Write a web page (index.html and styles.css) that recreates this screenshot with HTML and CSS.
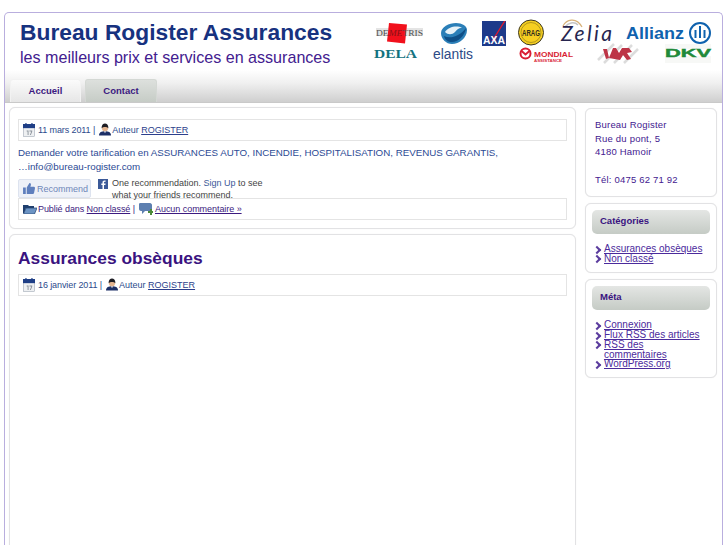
FILE: index.html
```html
<!DOCTYPE html>
<html lang="fr">
<head>
<meta charset="utf-8">
<title>Bureau Rogister Assurances</title>
<link rel="stylesheet" href="styles.css">
</head>
<body>
<svg width="0" height="0" class="defs">
  <defs>
    <symbol id="cal" viewBox="0 0 13 15">
      <rect x="0.5" y="1.5" width="12" height="13" fill="#eef0f2" stroke="#9aa4b0" stroke-width="0.6"/>
      <rect x="0" y="1" width="13" height="4.5" fill="#1f3f86"/>
      <rect x="2.5" y="0" width="1.4" height="2" fill="#1f3f86"/>
      <rect x="9" y="0" width="1.4" height="2" fill="#1f3f86"/>
      <path d="M4 8h2v5H5V9H4zM7 8h3v1l-1.500 4h-1l1.400-4H7z" fill="#8b929b"/>
    </symbol>
    <symbol id="user" viewBox="0 0 14 14">
      <path d="M0 14c0-4 3-5 7-5s7 1 7 5z" fill="#1c2f66"/>
      <circle cx="7" cy="5.500" r="3.600" fill="#e3b48f"/>
      <path d="M3 5.500C3 1.500 5 0 7 0s4 1.500 4 5.500C9 3.500 5 3.500 3 5.500z" fill="#1d1d24"/>
      <path d="M6 9h2l-1 2.500z" fill="#fff"/>
    </symbol>
  </defs>
</svg>
<div class="page">
  <header class="masthead">
    <div class="brand">
      <h1 class="title">Bureau Rogister Assurances</h1>
      <p class="tagline">les meilleurs prix et services en assurances</p>
    </div>
    <svg class="logos" width="350" height="50" viewBox="370 15 350 50">
      <!-- Demetris -->
      <rect x="376" y="28" width="47" height="8" fill="#e4e4e4"/>
      <path d="M389 23l18 1.500-2 19-18-2z" fill="#f1101c"/>
      <text x="376" y="35.500" class="lg-serif" font-size="9" fill="#4f4f4f" textLength="47" lengthAdjust="spacingAndGlyphs">DE<tspan fill="#8a1015" font-style="italic">ME</tspan>TRIS</text>
      <!-- Dela -->
      <text x="374" y="58" class="lg-serif" font-size="13" font-weight="700" fill="#12727f" textLength="43" lengthAdjust="spacingAndGlyphs">DELA</text>
      <!-- Elantis -->
      <path d="M441 33c0-6 8-10 15-10 6 0 11 3 11 7 0 8-8 14-15 14-6 0-11-5-11-11z" fill="#2b7fb8"/>
      <path d="M445 32c3-5 12-7 17-4-4 0-5 2-7 4-3 3-7 3-10 0z" fill="#e7f2f8"/>
      <path d="M444 36c6 3 15 1 22-8-1 8-8 14-14 14-4 0-7-2-8-6z" fill="#0f4f87"/>
      <text x="433" y="59" class="lg-sans" font-size="15.500" fill="#2c4a86" textLength="40" lengthAdjust="spacingAndGlyphs">elantis</text>
      <!-- AXA -->
      <rect x="482" y="21" width="24" height="25" fill="#1d3a8a"/>
      <path d="M504 21h1.500L493 41h-1.500z" fill="#e2192c"/>
      <text x="483" y="44" class="lg-sans" font-size="11" font-weight="700" fill="#fff" textLength="22" lengthAdjust="spacingAndGlyphs">AXA</text>
      <!-- Arag -->
      <circle cx="531" cy="32.500" r="12.500" fill="#f6cf21" stroke="#3a3520" stroke-width="1"/>
      <circle cx="531" cy="32.500" r="10" fill="none" stroke="#6d5f1a" stroke-width="0.500"/>
      <text x="522" y="36" class="lg-sans" font-size="8.500" font-weight="700" fill="#2f2c1d" textLength="18" lengthAdjust="spacingAndGlyphs">ARAG</text>
      <!-- Zelia -->
      <path d="M563 26c3-6 13-10 19 1" fill="none" stroke="#d8b27a" stroke-width="1.200"/>
      <path d="M565 27c3-4 9-6 13-2" fill="none" stroke="#c4c4c4" stroke-width="1.500"/>
      <text x="561" y="41" class="lg-script" font-size="21" fill="#27254f" textLength="51" lengthAdjust="spacing">Zelia</text>
      <!-- Allianz -->
      <text x="626" y="39" class="lg-sans" font-size="16" font-weight="700" fill="#0f62ae" textLength="58" lengthAdjust="spacingAndGlyphs">Allianz</text>
      <circle cx="700" cy="33" r="10" fill="none" stroke="#0f62ae" stroke-width="2"/>
      <path d="M694.500 30h2v8h-2zM699 26h2v12h-2zM703.500 30h2v8h-2z" fill="#0f62ae"/>
      <!-- Mondial -->
      <circle cx="525.500" cy="53.500" r="5" fill="#fff" stroke="#d91e34" stroke-width="2"/>
      <path d="M521 50.500l4.500 4 4.500-4" fill="none" stroke="#d91e34" stroke-width="2"/>
      <text x="534" y="57" class="lg-sans" font-size="7.500" font-weight="700" fill="#d91e34" textLength="39" lengthAdjust="spacingAndGlyphs">MONDIAL</text>
      <text x="534" y="62" class="lg-sans" font-size="3.800" font-weight="700" fill="#d91e34" textLength="28" lengthAdjust="spacingAndGlyphs">ASSISTANCE</text>
      <!-- IAR -->
      <path d="M598 60l16-16M604 63l18-18M614 63l18-18M624 63l14-14" stroke="#dcdcdc" stroke-width="2.500" fill="none"/>
      <path d="M603 49h4l2 9-3 1zM609 58l4-10 3 0 3 5 3-5 7 0 3 4-5 1 4 6-4 1-4-5-3 5z" fill="#bd3446"/>
      <!-- DKV -->
      <rect x="665" y="44" width="46" height="5" fill="#f7f8f6"/>
      <rect x="665" y="56" width="46" height="7" fill="#f7f8f6"/>
      <text x="665" y="56.500" class="lg-sans" font-size="10.500" font-weight="700" fill="#1f8a3a" textLength="46" lengthAdjust="spacingAndGlyphs" stroke="#1f8a3a" stroke-width="0.400">DKV</text>
    </svg>
  </header>
  <nav class="nav">
    <a class="tab tab-current" href="#">Accueil</a>
    <a class="tab" href="#">Contact</a>
  </nav>
  <div class="body">
    <main class="posts">
      <article class="card post post-first">
        <div class="meta">
          <svg class="ico-cal"><use href="#cal"/></svg>
          <span class="meta-date">11 mars 2011 |</span>
          <svg class="ico-user"><use href="#user"/></svg>
          <span class="meta-author">Auteur <a href="#">ROGISTER</a></span>
        </div>
        <p class="excerpt">Demander votre tarification en ASSURANCES AUTO, INCENDIE, HOSPITALISATION, REVENUS GARANTIS,<br>…info@bureau-rogister.com</p>
        <div class="social">
          <span class="recommend">
            <svg width="12" height="11" viewBox="0 0 13 12"><path d="M0 5h3v7H0zM4 5l3-5c2 0 2 2 1 4h4c1 0 1 1 1 2l-1 5c0 1-1 1-2 1H4z" fill="#5f7fbd"/></svg>
            Recommend
          </span>
          <svg class="fb" width="10" height="10" viewBox="0 0 10 10"><rect width="10" height="10" fill="#3b5998"/><path d="M6 10V6h1.400l.2-1.500H6V3.600c0-.5.200-.8.800-.8h.8V1.500H6.500C5 1.500 4.500 2.400 4.500 3.500v1H3.300V6h1.200v4z" fill="#fff"/></svg>
          <p class="fb-text">One recommendation. <a href="#">Sign Up</a> to see<br>what your friends recommend.</p>
        </div>
        <div class="meta meta-foot">
          <svg width="14" height="10" viewBox="0 0 14 10"><path d="M0 1h5l1 1h5v2H3L1 9H0z" fill="#1f3f6e"/><path d="M3 4h11l-2.500 6H0.500z" fill="#6c94c4" stroke="#1f3f6e" stroke-width="0.700"/></svg>
          <span class="foot-cat">Publié dans <a href="#">Non classé</a> |</span>
          <svg class="ico-comment" width="14" height="13" viewBox="0 0 14 13"><path d="M1 1h10c1 0 2 1 2 2v4c0 1-1 2-2 2H6l-3 3V9H2C1 9 0 8 0 7V3c0-1 0-2 1-2z" fill="#5d7fb0"/><path d="M9 9h2V7h2v2h1v2h-1v2h-2v-2H9z" fill="#4c8a3a"/></svg>
          <span class="foot-com"><a href="#">Aucun commentaire »</a></span>
        </div>
      </article>
      <article class="card post post-second">
        <h2 class="post-title">Assurances obsèques</h2>
        <div class="meta">
          <svg class="ico-cal"><use href="#cal"/></svg>
          <span class="meta-date">16 janvier 2011 |</span>
          <svg class="ico-user"><use href="#user"/></svg>
          <span class="meta-author">Auteur <a href="#">ROGISTER</a></span>
        </div>
      </article>
    </main>
    <aside class="sidebar">
      <section class="card widget widget-address">
        Bureau Rogister<br>Rue du pont, 5<br>4180 Hamoir<br><br>Tél: 0475 62 71 92
      </section>
      <section class="card widget widget-cats">
        <h3 class="widget-title">Catégories</h3>
        <ul class="links">
          <li><a href="#">Assurances obsèques</a></li>
          <li><a href="#">Non classé</a></li>
        </ul>
      </section>
      <section class="card widget">
        <h3 class="widget-title">Méta</h3>
        <ul class="links">
          <li><a href="#">Connexion</a></li>
          <li><a href="#">Flux RSS des articles</a></li>
          <li><a href="#">RSS des commentaires</a></li>
          <li><a href="#">WordPress.org</a></li>
        </ul>
      </section>
    </aside>
  </div>
</div>
</body>
</html>
```
FILE: styles.css
```css
* { box-sizing: border-box; }
html, body { margin: 0; padding: 0; height: 545px; overflow: hidden; background: #fff; }
body { font-family: "Liberation Sans", Arial, sans-serif; padding: 12px 4px 0; }
.defs { position: absolute; }
a { color: inherit; }

.page {
  width: 719px;
  height: 533px;
  border: 1px solid #b9aede;
  border-bottom: 0;
  border-radius: 5px 5px 0 0;
  overflow: hidden;
  background: #fff;
}

.masthead { display: flex; height: 57px; justify-content: space-between; }
.brand { padding: 6px 0 0 15px; }
.title {
  margin: 0;
  font-size: 22.800px;
  line-height: 26px;
  font-weight: 700;
  color: #17327f;
  white-space: nowrap;
}
.tagline {
  margin: 0;
  font-size: 16.100px;
  line-height: 24px;
  color: #43208f;
  white-space: nowrap;
}
.logos { margin: 2px 2px 0 0; flex: none; }
.lg-serif { font-family: "Liberation Serif", serif; }
.lg-sans { font-family: "Liberation Sans", sans-serif; }
.lg-script { font-family: "Lato", sans-serif; font-style: italic; font-weight: 400; }

.nav {
  height: 33px;
  padding: 9px 0 0 5px;
  display: flex;
  gap: 4px;
  align-items: stretch;
  background: linear-gradient(#fff, #f0f0f0 40%, #cfcfcf);
  border-bottom: 1px solid #c9c9c9;
}
.tab {
  width: 72px;
  border: 1px solid #d4d8d4;
  border-bottom: 0;
  border-radius: 3px 3px 0 0;
  background: linear-gradient(#dde0dd, #c6ccc6);
  color: #3c1a80;
  font-size: 9.500px;
  font-weight: 700;
  text-align: center;
  line-height: 21px;
  text-decoration: none;
}
.tab-current {
  width: 71px;
  border-color: #f2f2f2;
  background: linear-gradient(#fbfbfb, #e6e6e6);
}

.body { display: flex; padding: 4px 6px 0 4px; gap: 9px; height: 443px; align-items: flex-start; }
.card { border: 1px solid #e2e2e4; border-radius: 6px; background: #fff; box-shadow: 0 0 1px #e6e6e6; }

.posts { width: 567px; flex: none; display: flex; flex-direction: column; gap: 5px; }
.post { padding: 11px 8px 0; }
.post-first { height: 122px; }
.post-second { height: 340px; padding-top: 10px; }
.post-title { margin: 0 0 3px; font-size: 17.400px; line-height: 26px; font-weight: 700; color: #3a1380; }

.meta {
  display: flex;
  align-items: center;
  height: 22px;
  padding: 0 0 1px 4px;
  border: 1px solid #e4e4e4;
  font-size: 9px;
  color: #2c4a8c;
  white-space: nowrap;
}
.meta a { color: #2c3f8c; }
.meta-date { margin-left: 3px; letter-spacing: -0.100px; }
.meta-author { margin-left: 1px; }
.ico-cal { width: 12px; height: 14px; }
.ico-user { width: 12px; height: 13px; margin-left: 4px; }

.excerpt { margin: 5px 0 0; font-size: 9.760px; line-height: 14px; color: #2c4a94; }

.social { display: flex; height: 19px; margin-top: 5px; align-items: flex-start; }
.recommend {
  display: flex;
  align-items: center;
  gap: 2px;
  width: 73px;
  height: 19px;
  padding-left: 4px;
  border: 1px solid #dde3ef;
  border-radius: 2px;
  background: #eef1f8;
  color: #6f87b8;
  font-size: 9px;
  white-space: nowrap;
}
.fb { margin: 0 4px 0 7px; flex: none; }
.fb-text { margin: -2px 0 0; font-size: 9px; line-height: 12px; color: #444; white-space: nowrap; }
.fb-text a { color: #3b5998; text-decoration: none; }

.meta-foot { color: #3c1a80; }
.meta-foot a { color: #3c1a80; }
.foot-cat { margin-left: 1px; letter-spacing: -0.080px; }
.ico-comment { margin-left: 4px; }
.foot-com { margin-left: 2px; letter-spacing: -0.050px; }

.sidebar { width: 132px; flex: none; display: flex; flex-direction: column; gap: 6px; margin-top: 1px; }
.widget { padding: 6px 6px 8px; color: #43208f; }
.widget-address { height: 89px; padding: 9px 9px 0; font-size: 9.500px; line-height: 13.700px; letter-spacing: 0.200px; }
.widget-cats { padding-bottom: 9px; }
.widget-title {
  margin: 0 0 10px;
  height: 24px;
  padding-left: 8px;
  border-radius: 5px;
  background: linear-gradient(#e4e6e4, #c5cbc5);
  color: #3a1380;
  font-size: 9.500px;
  line-height: 22px;
  font-weight: 700;
}
.links { list-style: none; margin: 0; padding: 0 4px 0 12px; font-size: 10px; line-height: 9.700px; color: #4b2a9c; }
.links li { position: relative; }
.links li::before {
  content: "";
  position: absolute;
  left: -10px;
  top: 2.500px;
  width: 4px;
  height: 4px;
  border-top: 2px solid #5b3c9e;
  border-right: 2px solid #5b3c9e;
  transform: rotate(45deg);
}
```
